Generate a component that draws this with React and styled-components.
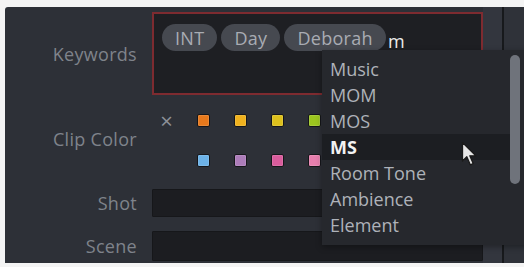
import React from "react";
import styled, { createGlobalStyle } from "styled-components";

const GlobalStyle = createGlobalStyle`
  html, body {
    margin: 0;
    padding: 0;
    background: #f4f4f4;
  }
  body {
    font-family: "Open Sans", "DejaVu Sans", sans-serif;
  }
`;

const keywords = ["INT", "Day", "Deborah"];

const swatchRows = [
  [null, "#e8791c", "#f0b21e", "#ddc01c", "#9cc61f"],
  [undefined, "#6cb2e8", "#ac7cb9", "#d95c9c", "#e77fae"],
];

const suggestions = ["Music", "MOM", "MOS", "MS", "Room Tone", "Ambience", "Element"];

export default function App() {
  return (
    <>
      <GlobalStyle />
      <Page>
        <Panel>
          <Main>
            <Row $height={83}>
              <Label>Keywords</Label>
              <KeywordBox>
                {keywords.map((k) => (
                  <Pill key={k}>{k}</Pill>
                ))}
                <Typed>m</Typed>
              </KeywordBox>
            </Row>
            <Row $height={94}>
              <Label $shift={6}>Clip Color</Label>
              <Swatches>
                {swatchRows.map((row, r) =>
                  row.map((c, i) =>
                    c === null ? (
                      <Clear key={`${r}-${i}`}>×</Clear>
                    ) : c === undefined ? (
                      <span key={`${r}-${i}`} />
                    ) : (
                      <Swatch key={`${r}-${i}`} $color={c} />
                    )
                  )
                )}
              </Swatches>
            </Row>
            <Row $height={28}>
              <Label>Shot</Label>
              <Input />
            </Row>
            <Row $height={30} $top={14}>
              <Label>Scene</Label>
              <Input />
            </Row>
          </Main>
          <Strip />
          <Divider />
          <Rest />
        </Panel>

        <Dropdown>
          {suggestions.map((s) => (
            <Item key={s} $active={s === "MS"}>
              {s}
            </Item>
          ))}
          <Thumb />
        </Dropdown>

        <Cursor width="19" height="26" viewBox="0 0 19 26">
          <path
            d="M1.5 1.5 L1.5 20 L5.8 15.8 L9.3 23.8 L12.2 22.5 L8.8 14.8 L14.8 14.8 Z"
            fill="#e6e6e6"
            stroke="#1a1a1a"
            strokeWidth="1.3"
            strokeLinejoin="round"
          />
        </Cursor>
      </Page>
    </>
  );
}

const Page = styled.div`
  position: relative;
  width: 524px;
  height: 267px;
  overflow: hidden;
  padding: 7px 0 4px 5px;
  box-sizing: border-box;
`;

const Panel = styled.div`
  display: flex;
  height: 256px;
  background: #2d3037;
  border-top-left-radius: 3px;
`;

const Main = styled.div`
  width: 478px;
  padding-top: 5px;
  box-sizing: border-box;
`;

const Row = styled.div`
  display: grid;
  grid-template-columns: 132px 331px;
  column-gap: 15px;
  align-items: center;
  height: ${(p) => p.$height}px;
  margin-top: ${(p) => p.$top || 0}px;
`;

const Label = styled.div`
  text-align: right;
  font-size: 18px;
  color: #7f838b;
  letter-spacing: 0.3px;
  margin-bottom: ${(p) => p.$shift || 0}px;
`;

const KeywordBox = styled.div`
  height: 83px;
  box-sizing: border-box;
  border: 2px solid #7e2b30;
  background: #1e1f23;
  padding: 10px 8px;
  display: flex;
  align-items: flex-start;
  gap: 4px;
`;

const Pill = styled.span`
  height: 27px;
  display: inline-flex;
  align-items: center;
  padding: 0 13px;
  border-radius: 14px;
  background: #464950;
  color: #a9acb3;
  font-size: 18px;
  letter-spacing: 0.3px;
`;

const Typed = styled.span`
  color: #ececec;
  font-size: 18px;
  line-height: 27px;
  margin-left: -2px;
  padding-top: 4px;
`;

const Swatches = styled.div`
  display: grid;
  grid-template-columns: repeat(5, 13px);
  grid-auto-rows: 13px;
  column-gap: 24px;
  row-gap: 27px;
  padding-left: 8px;
  margin-bottom: 4px;
`;

const Swatch = styled.span`
  width: 13px;
  height: 13px;
  box-sizing: border-box;
  border-radius: 2px;
  background: ${(p) => p.$color};
  border: 1px solid #15161a;
  box-shadow: inset 0 0 0 1px rgba(255, 255, 255, 0.12);
`;

const Clear = styled.span`
  width: 13px;
  height: 13px;
  display: flex;
  align-items: center;
  justify-content: center;
  font-size: 22px;
  line-height: 1;
  color: #8d9098;
`;

const Input = styled.div`
  height: 100%;
  box-sizing: border-box;
  background: #1c1d21;
  border: 1px solid #16171a;
  border-radius: 1px;
`;

const Strip = styled.div`
  width: 19px;
  background: #33363e;
`;

const Divider = styled.div`
  width: 2px;
  background: #17191c;
`;

const Rest = styled.div`
  flex: 1;
  background: #2f3239;
`;

const Dropdown = styled.div`
  position: absolute;
  left: 322px;
  top: 50px;
  width: 210px;
  height: 195px;
  box-sizing: border-box;
  padding-top: 6px;
  background: #26282d;
  box-shadow: 0 2px 6px rgba(0, 0, 0, 0.35);
`;

const Item = styled.div`
  height: 26px;
  display: flex;
  align-items: center;
  padding-left: 8px;
  margin-right: 20px;
  font-size: 18px;
  color: ${(p) => (p.$active ? "#f2f2f2" : "#aeb2b9")};
  font-weight: ${(p) => (p.$active ? 700 : 400)};
  background: ${(p) => (p.$active ? "#1c1e22" : "transparent")};
`;

const Thumb = styled.div`
  position: absolute;
  top: 5px;
  left: 188px;
  width: 10px;
  height: 129px;
  border-radius: 5px;
  background: #6f737b;
`;

const Cursor = styled.svg`
  position: absolute;
  left: 461px;
  top: 141px;
`;
